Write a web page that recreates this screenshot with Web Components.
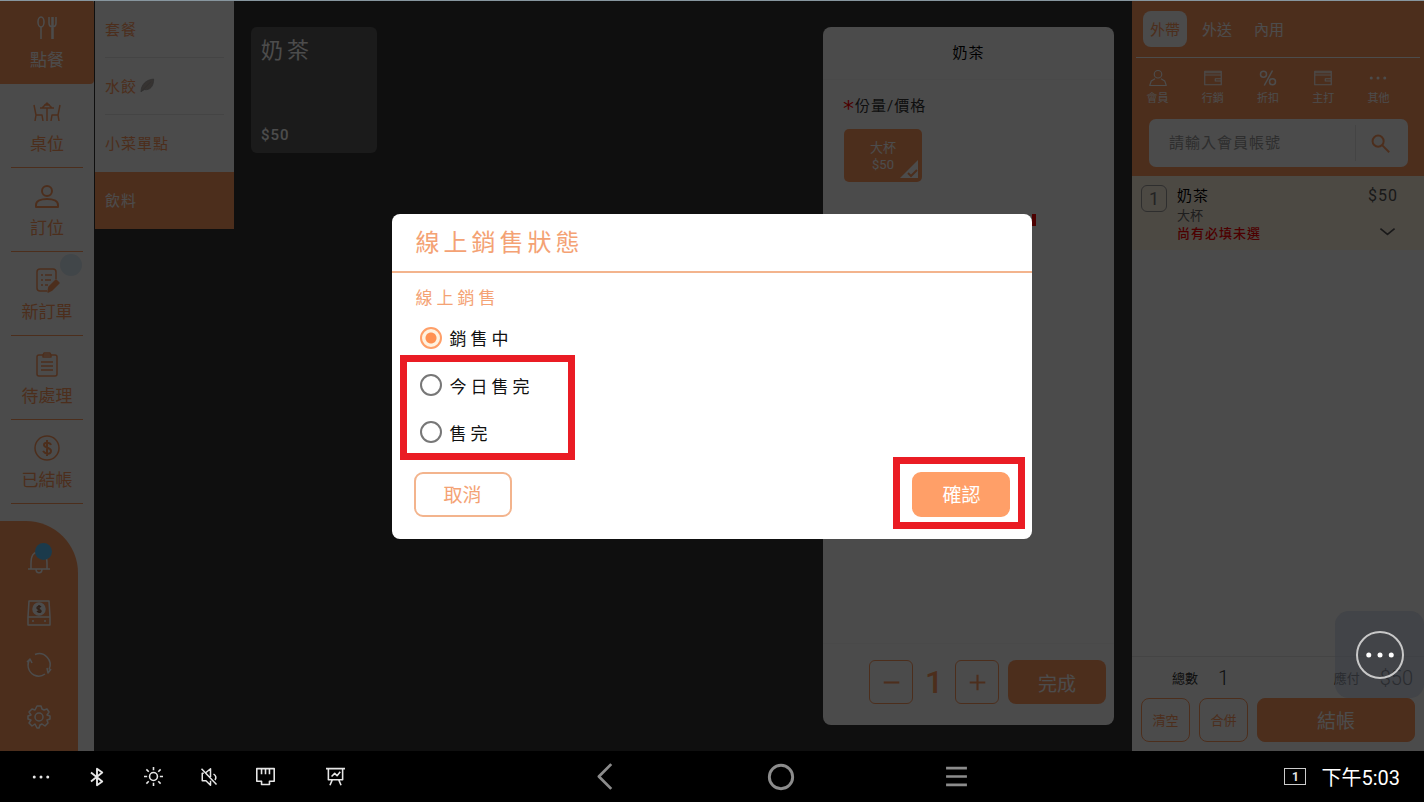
<!DOCTYPE html>
<html lang="zh-Hant">
<head>
<meta charset="utf-8">
<meta name="viewport" content="width=device-width, initial-scale=1">
<title>線上銷售狀態</title>
<style>
  body {
    margin: 0;
    font-family: Roboto, "Noto Sans CJK TC", sans-serif;
    --orange: #ff9a60;
    --line: #e4e4e4;
  }
</style>
</head>
<body>
<pos-app>
  <side-nav slot="nav"></side-nav>
  <category-list slot="categories"></category-list>
  <product-tile slot="products">
    <span slot="name">奶茶</span>
    <span slot="price">$50</span>
  </product-tile>
  <item-detail slot="detail"></item-detail>
  <order-panel slot="order"></order-panel>
  <sale-dialog slot="dialog">
    <span slot="title">線上銷售狀態</span>
  </sale-dialog>
  <float-button slot="float"></float-button>
  <system-bar slot="bar"></system-bar>
</pos-app>

<script>
const icons = {
  cutlery: '<ellipse cx="6" cy="6" rx="3" ry="5"/><path d="M6 11v12M14 1v6c0 5 7 5 7 0V1M17 1v22M18 1v22"/>',
  table: '<path d="M-1 5l2 10h6l1 6M1 15l-1 6M25 5l-2 10h-6l-1 6M23 15l1 6M5 8h14M9 5h6M7 8l5-5 5 5M12 8v13"/>',
  person: '<circle cx="12" cy="7" r="5"/><path d="M1 23v-2c0-4 5-6 11-6s11 2 11 6v2z"/>',
  edit: '<path d="M21 11V4q0-3-3-3H5Q2 1 2 4v16q0 3 3 3h7M6 7h2M6 12h2M6 17h2M10 7h7M10 12h6M10 17h3"/><path d="M13 24l1-5 7-7 3 3-7 7z" fill="currentColor"/>',
  clipboard: '<rect x="2" y="3" width="20" height="21" rx="2"/><path d="M8 3l1-2h6l1 2v2H8zM6 10h12M6 14h12M6 18h12"/>',
  dollar: '<circle cx="12" cy="12" r="12"/><path d="M16 9c-1-3-7-3-7 0s7 2 7 6-6 3-8 0M12 4v16" stroke-width="2"/>',
  bell: '<path d="M1 20h22M4 20c0-8-1-17 8-17s8 9 8 17M9 20c0 5 6 5 6 0"/>',
  cashbox: '<path d="M2 0h20l1 16v8H1v-8zM1 16h22M5 20h2M17 20h2"/><circle cx="12" cy="8" r="6" fill="currentColor"/><path d="M14 6c-1-1-4-1-4 1s4 1 4 3-3 1-4 0M12 4v8" stroke="#a36d4e"/>',
  sync: '<path d="M7 22A11 11 0 0 1 3 6M8 1.500a11 11 0 0 1 14 15M18 21a11 11 0 0 1-11 1M0 9l3-3 2 4M24 16l-3 4-1-5"/>',
  gear: '<circle cx="12" cy="12" r="4"/><path d="M10 1h4l1 3 2 1 3-1 2 3-2 3 3 1v3l-3 1 1 3-3 3-3-2-2 1-1 3h-2l-2-4-3 2-3-3 2-3-3-1v-3l3-1-2-3 3-3 3 1z"/>',
  member: '<circle cx="12" cy="7" r="5"/><path d="M8 13l-5 3-2 6h22l-2-6-5-3"/>',
  wallet: '<path d="M1 3h22v18H1zM1 8h22M1 5h22M23 13h-8v3h8"/>',
  percent: '<circle cx="6" cy="7" r="4"/><circle cx="18" cy="17" r="4"/><path d="M18 2L7 22"/>',
  more: '<g fill="currentColor" stroke="none"><circle cx="3" cy="12" r="2"/><circle cx="12" cy="12" r="2"/><circle cx="21" cy="12" r="2"/></g>',
  search: '<circle cx="9" cy="9" r="7"/><path d="M14 14l9 9"/>',
  chevron: '<path d="M2 8l10 8 10-8"/>',
  minus: '<path d="M1 12h22"/>',
  plus: '<path d="M1 12h22M12 1v22"/>',
  leaf: '<path d="M3 22c0-10 7-18 19-19 0 12-6 17-14 16zM3 22L18 7" fill="#b5aaa5"/>',
  bluetooth: '<path d="M4 6l15 12-7 5V1l7 5L4 18"/>',
  sun: '<circle cx="12" cy="12" r="5"/><path d="M12 0v4M12 20v4M0 12h4M20 12h4M3 3l3 3M18 18l3 3M3 21l3-3M18 6l3-3"/>',
  mute: '<path d="M8 6l6-5v11M14 17v6l-6-6H3V7h2M2 1l20 21M18 8c3 2 4 5 2 8"/>',
  ethernet: '<path d="M1 2h22v16h-6v4H7v-4H1zM7 2v7M12 2v7M17 2v7"/>',
  board: '<path d="M0 2h24M3 2v14h18V2M7 12l4-4 3 3 4-5M8 16l-3 7M16 16l3 7"/>',
  back: '<path d="M18 1L7 12l11 11"/>',
  home: '<circle cx="12" cy="12" r="10"/>',
  menu: '<path d="M2 4h20M2 12h20M2 20h20"/>'
};

class PosIcon extends HTMLElement {
  constructor() {
    super();
    this.attachShadow({ mode: 'open' });
  }

  connectedCallback() {
    const size = this.getAttribute('size') || 24;
    const stroke = this.getAttribute('stroke') || 1;
    this.shadowRoot.innerHTML = `
      <style>
        :host {
          display: inline-flex;
        }

        svg {
          fill: none;
          stroke: currentColor;
          stroke-linejoin: round;
          overflow: visible;
        }
      </style>
      <svg width='${size}' height='${size}' viewBox='0 0 24 24' stroke-width='${stroke}' aria-hidden='true'>
        ${icons[this.getAttribute('name')]}
      </svg>
    `;
  }
}

class PosApp extends HTMLElement {
  constructor() {
    super();

    this.attachShadow({ mode: 'open' });
    this.shadowRoot.innerHTML = `
      <style>
        :host {
          display: flex;
          flex-direction: column;
          min-height: 100vh;
          background: #000;
        }

        .screen {
          position: relative;
          flex: 1;
          display: grid;
          grid-template-columns: 94px 140px 1fr 292px;
          background: #353535;
        }

        main {
          display: flex;
          justify-content: space-between;
          padding: 27px 18px 26px 17px;
        }

        .backdrop {
          position: absolute;
          inset: 0;
          display: grid;
          place-items: center;
          background: rgba(0, 0, 0, 0.7);
          border-top: 1px solid #87969f;
          box-sizing: border-box;
        }

        .float {
          position: absolute;
          right: 0;
          bottom: 53px;
        }
      </style>
      <div class='screen'>
        <slot name='nav'></slot>
        <slot name='categories'></slot>
        <main>
          <slot name='products'></slot>
          <slot name='detail'></slot>
        </main>
        <slot name='order'></slot>
        <div class='backdrop'><slot name='dialog'></slot></div>
        <div class='float'><slot name='float'></slot></div>
      </div>
      <slot name='bar'></slot>
    `;
  }
}

class SideNav extends HTMLElement {
  constructor() {
    super();

    this.attachShadow({ mode: 'open' });
    this.shadowRoot.innerHTML = `
      <style>
        :host {
          display: flex;
          flex-direction: column;
          justify-content: space-between;
          background: #fbfbfb;
        }

        a {
          position: relative;
          display: flex;
          flex-direction: column;
          align-items: center;
          gap: 8px;
          height: 84px;
          padding-top: 16px;
          box-sizing: border-box;
          color: var(--orange);
          font-size: 17px;
          line-height: 24px;
          text-decoration: none;
        }

        a::after {
          content: '';
          position: absolute;
          left: 11px;
          right: 11px;
          bottom: 0;
          border-bottom: 1px solid var(--orange);
        }

        a.active {
          background: var(--orange);
          border-radius: 0 4px 4px 0;
          color: #fff;
        }

        a.active::after {
          border: 0;
        }

        a i {
          position: absolute;
          right: 12px;
          top: 2px;
          width: 22px;
          height: 22px;
          border-radius: 50%;
          background: #dbe9f3;
        }

        .tools {
          display: flex;
          flex-direction: column;
          gap: 28px;
          width: 78px;
          padding: 28px 0 22px;
          box-sizing: border-box;
          align-items: center;
          background: var(--orange);
          border-radius: 0 52px 0 0;
        }

        button {
          position: relative;
          display: flex;
          padding: 0;
          border: 0;
          background: none;
          color: #fff;
        }

        button i {
          position: absolute;
          left: 8px;
          top: -6px;
          width: 17px;
          height: 17px;
          border-radius: 50%;
          background: #5cc4fa;
        }
      </style>
      <nav>
        <a class='active' href='#order'><pos-icon name='cutlery' stroke='1.5'></pos-icon>點餐</a>
        <a href='#tables'><pos-icon name='table' stroke='1.5'></pos-icon>桌位</a>
        <a href='#booking'><pos-icon name='person' stroke='2'></pos-icon>訂位</a>
        <a href='#new'><i></i><pos-icon name='edit' stroke='1.5'></pos-icon>新訂單</a>
        <a href='#pending'><pos-icon name='clipboard' stroke='1.5'></pos-icon>待處理</a>
        <a href='#paid'><pos-icon name='dollar' stroke='1.5'></pos-icon>已結帳</a>
      </nav>
      <div class='tools'>
        <button aria-label='通知'><pos-icon name='bell' stroke='1.5'></pos-icon><i></i></button>
        <button aria-label='錢箱'><pos-icon name='cashbox' stroke='1.5'></pos-icon></button>
        <button aria-label='同步'><pos-icon name='sync' stroke='1.5'></pos-icon></button>
        <button aria-label='設定'><pos-icon name='gear' stroke='1.5'></pos-icon></button>
      </div>
    `;
  }
}

class CategoryList extends HTMLElement {
  constructor() {
    super();

    this.attachShadow({ mode: 'open' });
    this.shadowRoot.innerHTML = `
      <style>
        :host {
          display: block;
          padding-left: 1px;
        }

        nav {
          display: flex;
          flex-direction: column;
          background: #fbfbfb;
          padding-top: 1px;
        }

        a {
          display: flex;
          align-items: center;
          gap: 2px;
          height: 57px;
          margin: 0 10px;
          padding-bottom: 2px;
          box-sizing: border-box;
          border-bottom: 1px solid var(--line);
          color: var(--orange);
          font-size: 15px;
          letter-spacing: 1px;
          text-decoration: none;
        }

        a:nth-child(3) {
          border: 0;
        }

        a.active {
          margin: 0;
          padding: 0 10px 2px;
          border: 0;
          background: var(--orange);
          color: #fff;
        }

        pos-icon {
          color: #999;
        }
      </style>
      <nav>
        <a href='#set'>套餐</a>
        <a href='#dumpling'>水餃<pos-icon name='leaf' size='16'></pos-icon></a>
        <a href='#side'>小菜單點</a>
        <a class='active' href='#drink'>飲料</a>
      </nav>
    `;
  }
}

class ProductTile extends HTMLElement {
  constructor() {
    super();

    this.attachShadow({ mode: 'open' });
    this.shadowRoot.innerHTML = `
      <style>
        button {
          display: flex;
          flex-direction: column;
          justify-content: space-between;
          align-items: flex-start;
          width: 126px;
          height: 126px;
          padding: 8px 10px;
          border: 0;
          border-radius: 6px;
          background: #5a5a5a;
          color: #fff;
          font: 22px/32px Roboto, "Noto Sans CJK TC", sans-serif;
          letter-spacing: 4px;
        }

        .price {
          font-size: 15px;
          font-weight: 500;
          line-height: 20px;
          letter-spacing: 1px;
        }
      </style>
      <button>
        <slot name='name'></slot>
        <span class='price'><slot name='price'></slot></span>
      </button>
    `;
  }
}

class ItemDetail extends HTMLElement {
  constructor() {
    super();

    this.attachShadow({ mode: 'open' });
    this.shadowRoot.innerHTML = `
      <style>
        :host {
          display: flex;
          flex-direction: column;
          width: 291px;
          border-radius: 8px;
          background: #fbfbfb;
        }

        h2 {
          margin: 0;
          font-size: 15px;
          font-weight: 400;
          line-height: 52px;
          letter-spacing: 1px;
          text-align: center;
          border-bottom: 1px solid #f4f4f4;
        }

        section {
          flex: 1;
          padding: 14px 20px;
        }

        h3 {
          display: flex;
          align-items: center;
          margin: 0 0 11px;
          color: #333;
          font-size: 15px;
          font-weight: 400;
          line-height: 24px;
          letter-spacing: 1px;
        }

        h3 b {
          height: 14px;
          color: #f00;
          font: 22px/20px "DejaVu Sans", sans-serif;
        }

        .chip {
          position: relative;
          display: block;
          width: 78px;
          height: 53px;
          margin-left: 1px;
          border: 0;
          border-radius: 5px;
          background: var(--orange);
          color: #fff;
          font: 13px/17px Roboto, "Noto Sans CJK TC", sans-serif;
        }

        .chip svg {
          position: absolute;
          right: 4px;
          bottom: 4px;
        }

        .required {
          width: 4px;
          height: 12px;
          margin: 32px 58px 0 auto;
          background: #f00;
        }

        footer {
          display: flex;
          align-items: center;
          justify-content: flex-end;
          gap: 9px;
          padding: 16px 8px 21px;
          border-top: 1px solid #f4f4f4;
        }

        .step {
          display: flex;
          align-items: center;
          justify-content: center;
          width: 44px;
          height: 44px;
          padding: 0;
          border: 1px solid var(--orange);
          border-radius: 6px;
          background: none;
          color: var(--orange);
        }

        output {
          width: 24px;
          color: var(--orange);
          font-size: 32px;
          font-weight: 500;
          line-height: 44px;
          text-align: center;
        }

        .done {
          width: 98px;
          height: 44px;
          border: 0;
          border-radius: 8px;
          background: var(--orange);
          color: #fff;
          font: 19px "Noto Sans CJK TC", sans-serif;
        }
      </style>
      <h2>奶茶</h2>
      <section>
        <h3><b>*</b>份量/價格</h3>
        <button class='chip'>
          大杯<br>$50
          <svg width='18' height='18' viewBox='0 0 18 18' aria-hidden='true'>
            <path d='M18 0v18H0z' fill='#fff'/>
            <path d='M8 13l3 3 6-6' fill='none' stroke='#ff9a60' stroke-width='2'/>
          </svg>
        </button>
        <div class='required'></div>
      </section>
      <footer>
        <button class='step' aria-label='減少'><pos-icon name='minus' size='17' stroke='3'></pos-icon></button>
        <output>1</output>
        <button class='step' aria-label='增加'><pos-icon name='plus' size='17' stroke='3'></pos-icon></button>
        <button class='done'>完成</button>
      </footer>
    `;
  }
}

class OrderPanel extends HTMLElement {
  constructor() {
    super();

    this.attachShadow({ mode: 'open' });
    this.shadowRoot.innerHTML = `
      <style>
        :host {
          display: flex;
          flex-direction: column;
          background: #fbfbfb;
        }

        header {
          height: 176px;
          box-sizing: border-box;
          padding-top: 11px;
          background: var(--orange);
        }

        button {
          padding: 0;
          border: 0;
          background: none;
          font-family: inherit;
        }

        .tabs {
          display: flex;
          gap: 8px;
          margin: 0 4px;
          padding: 0 7px 10px;
          border-bottom: 1px solid #fff;
        }

        .tabs button {
          width: 44px;
          height: 36px;
          padding-bottom: 2px;
          border-radius: 8px;
          color: #fff;
          font-size: 15px;
        }

        .tabs .active {
          background: #fbfbfb;
          color: var(--orange);
        }

        .actions {
          display: grid;
          grid-template-columns: repeat(5, 1fr);
          margin: 11px 18px 0 -2px;
        }

        .actions button {
          display: flex;
          flex-direction: column;
          align-items: center;
          gap: 4px;
          color: #fff;
          font-size: 11px;
          line-height: 16px;
        }

        .search {
          display: flex;
          align-items: center;
          height: 48px;
          margin: 12px 16px 0 17px;
          border-radius: 7px;
          background: #fbfbfb;
        }

        .search input {
          flex: 1;
          min-width: 0;
          padding: 0 0 0 20px;
          border: 0;
          background: none;
          font: 15px Roboto, "Noto Sans CJK TC", sans-serif;
          letter-spacing: 1px;
        }

        .search input::placeholder {
          color: #999;
        }

        .search button {
          display: grid;
          place-items: center;
          width: 53px;
          height: 36px;
          padding-right: 4px;
          border-left: 1px solid var(--line);
          color: var(--orange);
        }

        .line {
          display: grid;
          grid-template-columns: 26px 1fr auto;
          column-gap: 10px;
          height: 74px;
          padding: 9px 26px 0 9px;
          box-sizing: border-box;
          background: #fff3e2;
        }

        .count {
          width: 26px;
          height: 27px;
          box-sizing: border-box;
          border: 1px solid #999;
          border-radius: 6px;
          color: #777;
          font-size: 18px;
          line-height: 26px;
          text-align: center;
        }

        .name {
          font-size: 15px;
          line-height: 22px;
          letter-spacing: 1px;
        }

        .size,
        .error {
          font-size: 13px;
          line-height: 18px;
        }

        .size {
          color: #666;
        }

        .error {
          color: #f00;
          font-weight: 500;
          letter-spacing: 1px;
        }

        .price {
          display: flex;
          flex-direction: column;
          align-items: flex-end;
          gap: 16px;
          color: #555;
          font-size: 16px;
          line-height: 22px;
          letter-spacing: 1px;
        }

        .price pos-icon {
          margin-right: 2px;
        }

        footer {
          margin-top: auto;
          padding: 0 9px 9px;
          border-top: 1px solid var(--line);
        }

        .totals {
          display: flex;
          align-items: center;
          height: 41px;
          padding: 0 2px 0 31px;
          color: #333;
          font-size: 13px;
        }

        .totals b {
          margin: 0 20px;
          font-size: 20px;
          font-weight: 300;
        }

        .totals b:last-child {
          margin-right: 0;
        }

        .totals .due {
          margin-left: auto;
        }

        .buttons {
          display: grid;
          grid-template-columns: 49px 49px 1fr;
          gap: 9px;
        }

        .buttons button {
          height: 44px;
          padding-bottom: 2px;
          border: 1px solid var(--orange);
          border-radius: 8px;
          color: var(--orange);
          font-size: 13px;
        }

        .buttons .pay {
          background: var(--orange);
          color: #fff;
          font-size: 19px;
        }
      </style>
      <header>
        <div class='tabs'>
          <button class='active'>外帶</button>
          <button>外送</button>
          <button>內用</button>
        </div>
        <div class='actions'>
          <button><pos-icon name='member' size='18' stroke='1.5'></pos-icon>會員</button>
          <button><pos-icon name='wallet' size='18' stroke='1.5'></pos-icon>行銷</button>
          <button><pos-icon name='percent' size='18' stroke='2'></pos-icon>折扣</button>
          <button><pos-icon name='wallet' size='18' stroke='1.5'></pos-icon>主打</button>
          <button><pos-icon name='more' size='18'></pos-icon>其他</button>
        </div>
        <div class='search'>
          <input type='text' placeholder='請輸入會員帳號' aria-label='會員帳號'>
          <button aria-label='搜尋'><pos-icon name='search' size='19' stroke='2.5'></pos-icon></button>
        </div>
      </header>
      <div class='line'>
        <div class='count'>1</div>
        <div>
          <div class='name'>奶茶</div>
          <div class='size'>大杯</div>
          <div class='error'>尚有必填未選</div>
        </div>
        <div class='price'>$50<pos-icon name='chevron' size='17' stroke='2.5'></pos-icon></div>
      </div>
      <footer>
        <div class='totals'>總數<b>1</b><span class='due'>應付</span><b>$50</b></div>
        <div class='buttons'>
          <button>清空</button>
          <button>合併</button>
          <button class='pay'>結帳</button>
        </div>
      </footer>
    `;
  }
}

class SaleDialog extends HTMLElement {
  constructor() {
    super();

    this.attachShadow({ mode: 'open' });
    this.shadowRoot.innerHTML = `
      <style>
        :host {
          display: block;
          width: 45%;
        }

        dialog {
          position: static;
          display: block;
          width: auto;
          margin: 0;
          padding: 0;
          border: 0;
          border-radius: 8px;
          background: #fff;
          color: #111;
        }

        h1 {
          margin: 0;
          padding: 2px 24px 0;
          border-bottom: 2px solid #f3b48d;
          color: #f4a274;
          font-size: 24px;
          font-weight: 400;
          line-height: 55px;
          letter-spacing: 4px;
        }

        fieldset {
          margin: 0;
          padding: 13px 22px 0;
          border: 0;
          font-size: 17px;
          letter-spacing: 4px;
        }

        legend {
          float: left;
          width: 100%;
          padding: 0 2px;
          box-sizing: border-box;
          color: #f4a274;
          line-height: 24px;
        }

        label {
          display: flex;
          align-items: center;
          gap: 8px;
          height: 47px;
          padding-left: 6px;
        }

        legend + label {
          clear: both;
          height: 52px;
          padding-top: 4px;
          box-sizing: border-box;
        }

        input {
          appearance: none;
          width: 22px;
          height: 22px;
          margin: 0;
          border: 2px solid #777;
          border-radius: 50%;
        }

        input:checked {
          border-color: #ff9f68;
          background: radial-gradient(#ff9152 5px, #fff2e0 6px);
        }

        .marked {
          position: relative;
        }

        .marked::after {
          content: '';
          position: absolute;
          border: 7px solid #ea1c24;
          pointer-events: none;
        }

        .options::after {
          inset: -7px auto -4px -14px;
          width: 161px;
        }

        .confirm::after {
          inset: -15px -15px -12px -19px;
        }

        footer {
          display: flex;
          justify-content: space-between;
          padding: 16px 22px 22px;
        }

        button {
          width: 98px;
          height: 45px;
          padding: 0 0 2px;
          border: 2px solid #f3b48d;
          border-radius: 9px;
          background: #fff;
          color: #f4a274;
          font: 19px "Noto Sans CJK TC", sans-serif;
        }

        .confirm button {
          border-color: #ff9f68;
          background: #ff9f68;
          color: #fff;
        }
      </style>
      <dialog open>
        <h1><slot name='title'></slot></h1>
        <fieldset>
          <legend>線上銷售</legend>
          <label><input type='radio' name='state' checked>銷售中</label>
          <div class='marked options'>
            <label><input type='radio' name='state'>今日售完</label>
            <label><input type='radio' name='state'>售完</label>
          </div>
        </fieldset>
        <footer>
          <button id='cancel'>取消</button>
          <div class='marked confirm'><button id='ok'>確認</button></div>
        </footer>
      </dialog>
    `;
  }
}

class FloatButton extends HTMLElement {
  constructor() {
    super();

    this.attachShadow({ mode: 'open' });
    this.shadowRoot.innerHTML = `
      <style>
        :host {
          display: block;
        }

        button {
          display: grid;
          place-items: center;
          width: 89px;
          height: 87px;
          padding: 0;
          border: 0;
          border-radius: 14px;
          background: rgba(60, 63, 70, 0.6);
          color: #fff;
        }

        span {
          display: grid;
          place-items: center;
          width: 44px;
          height: 44px;
          border: 2px solid #c8c8c8;
          border-radius: 50%;
        }
      </style>
      <button aria-label='更多'><span><pos-icon name='more' size='30'></pos-icon></span></button>
    `;
  }
}

class SystemBar extends HTMLElement {
  constructor() {
    super();

    this.attachShadow({ mode: 'open' });
    this.shadowRoot.innerHTML = `
      <style>
        :host {
          display: flex;
          align-items: center;
          height: 51px;
          padding: 0 24px 0 13px;
          background: #000;
          color: #e6e6e6;
        }

        button {
          display: grid;
          place-items: center;
          width: 56px;
          height: 48px;
          padding: 0;
          border: 0;
          background: none;
          color: inherit;
        }

        .status,
        .keys {
          display: flex;
        }

        .status button:last-child {
          margin-left: 14px;
        }

        .keys {
          gap: 120px;
          margin-left: 15vw;
          color: #8c8c8c;
        }

        .input {
          margin-left: auto;
          width: 20px;
          height: 15px;
          border: 1px solid #ccc;
          font-size: 12px;
          font-weight: 700;
          line-height: 16px;
          text-align: center;
        }

        time {
          margin-left: 15px;
          color: #fff;
          font-size: 20px;
        }
      </style>
      <div class='status'>
        <button aria-label='更多'><pos-icon name='more' size='18'></pos-icon></button>
        <button aria-label='藍牙'><pos-icon name='bluetooth' size='18' stroke='2.5'></pos-icon></button>
        <button aria-label='亮度'><pos-icon name='sun' size='19' stroke='2'></pos-icon></button>
        <button aria-label='靜音'><pos-icon name='mute' size='18' stroke='2'></pos-icon></button>
        <button aria-label='網路'><pos-icon name='ethernet' size='19' stroke='2'></pos-icon></button>
        <button aria-label='簡報'><pos-icon name='board' size='19' stroke='2'></pos-icon></button>
      </div>
      <div class='keys'>
        <button aria-label='返回'><pos-icon name='back' size='27' stroke='2.5'></pos-icon></button>
        <button aria-label='主畫面'><pos-icon name='home' size='28' stroke='2.5'></pos-icon></button>
        <button aria-label='選單'><pos-icon name='menu' size='25' stroke='2.5'></pos-icon></button>
      </div>
      <div class='input'>1</div>
      <time>下午5:03</time>
    `;
  }
}

customElements.define('pos-icon', PosIcon);
customElements.define('pos-app', PosApp);
customElements.define('side-nav', SideNav);
customElements.define('category-list', CategoryList);
customElements.define('product-tile', ProductTile);
customElements.define('item-detail', ItemDetail);
customElements.define('order-panel', OrderPanel);
customElements.define('sale-dialog', SaleDialog);
customElements.define('float-button', FloatButton);
customElements.define('system-bar', SystemBar);
</script>
</body>
</html>
